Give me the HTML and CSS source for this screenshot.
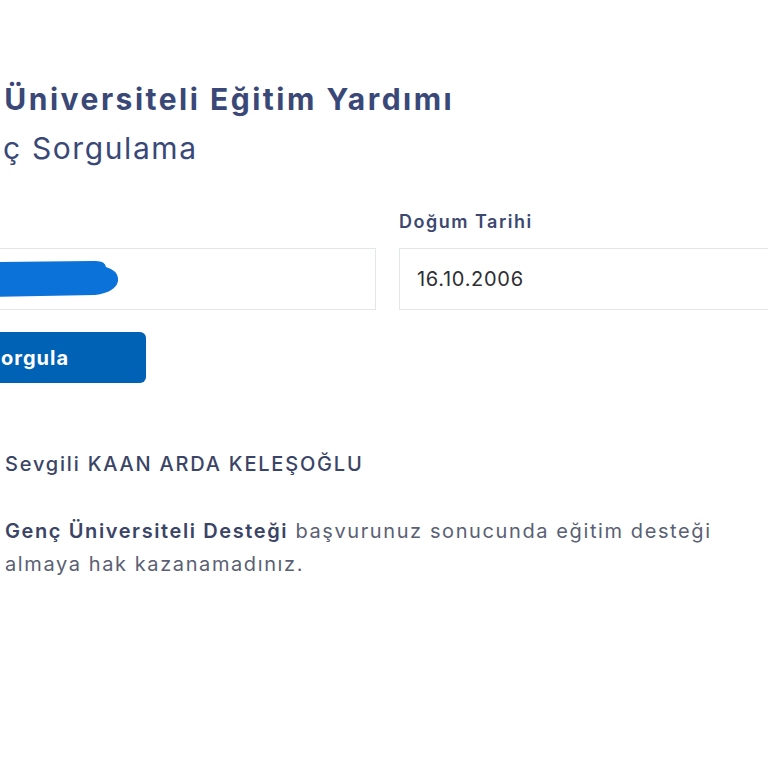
FILE: index.html
```html
<!DOCTYPE html>
<html lang="tr">
<head>
<meta charset="utf-8">
<title>Genç Üniversiteli Eğitim Yardımı</title>
<link rel="stylesheet" href="styles.css">
</head>
<body>
<main class="page">
  <h1 class="title">Genç Üniversiteli Eğitim Yardımı</h1>
  <h2 class="subtitle">Sonuç Sorgulama</h2>

  <form class="form">
    <div class="field">
      <label class="label label-hidden">T.C. Kimlik No</label>
      <div class="input input-masked">
        <svg class="blob" width="193" height="44" viewBox="0 0 193 44" aria-hidden="true">
          <path d="M0 6 L168 4 Q180 3 181 10 Q194 14 193 24 Q191 35 170 38 L0 41 Z" fill="#0a72d8"/>
        </svg>
      </div>
    </div>
    <div class="field">
      <label class="label">Doğum Tarihi</label>
      <div class="input">16.10.2006</div>
    </div>
  </form>
  <button class="btn" type="button">Sorgula</button>

  <section class="result">
    <p class="greet">Sevgili KAAN ARDA KELEŞOĞLU</p>
    <p class="msg"><strong>Genç Üniversiteli Desteği</strong> başvurunuz sonucunda eğitim desteği almaya hak kazanamadınız.</p>
  </section>
</main>
</body>
</html>
```
FILE: styles.css
```css
html, body {
  margin: 0;
  padding: 0;
  background: #ffffff;
}
body {
  font-family: Inter, "Open Sans", sans-serif;
  overflow: hidden;
}
.page {
  margin-left: -76px;
  padding-top: 81px;
  width: 927px;
}
.title {
  margin: 0 0 13px -16px;
  font-size: 30px;
  line-height: 36px;
  font-weight: 700;
  letter-spacing: 2.5px;
  color: #3a4878;
}
.subtitle {
  margin: 0;
  font-size: 30px;
  line-height: 36px;
  font-weight: 400;
  letter-spacing: 1.6px;
  color: #3a4878;
}
.form {
  display: grid;
  grid-template-columns: 452px 452px;
  column-gap: 23px;
  margin-top: 44px;
}
.field {
  display: flex;
  flex-direction: column;
}
.label {
  font-size: 18px;
  line-height: 24px;
  font-weight: 600;
  letter-spacing: 1.5px;
  color: #3c4870;
  margin-bottom: 14px;
}
.label-hidden {
  visibility: hidden;
}
.input {
  box-sizing: border-box;
  height: 62px;
  border: 1px solid #e3e6ec;
  display: flex;
  align-items: center;
  padding: 0 17px;
  font-size: 20px;
  letter-spacing: 0.7px;
  color: #2e2e33;
}
.input-masked {
  padding: 0;
}
.blob {
  display: block;
}
.btn {
  margin-top: 22px;
  width: 222px;
  height: 51px;
  border: 0;
  border-radius: 6px;
  background: #0062b4;
  color: #ffffff;
  font-family: inherit;
  font-size: 20px;
  font-weight: 700;
  letter-spacing: 1px;
  padding: 0 14px 0 0;
}
.result {
  padding-left: 81px;
  margin-top: 67px;
}
.greet {
  margin: 0;
  font-size: 20px;
  line-height: 28px;
  font-weight: 500;
  letter-spacing: 1.8px;
  color: #3a4466;
}
.msg {
  margin: 37px 0 0;
  font-size: 20px;
  line-height: 33px;
  letter-spacing: 1.6px;
  color: #5a5f74;
  max-width: 720px;
}
.msg strong {
  font-weight: 600;
  color: #3a4466;
}
```
